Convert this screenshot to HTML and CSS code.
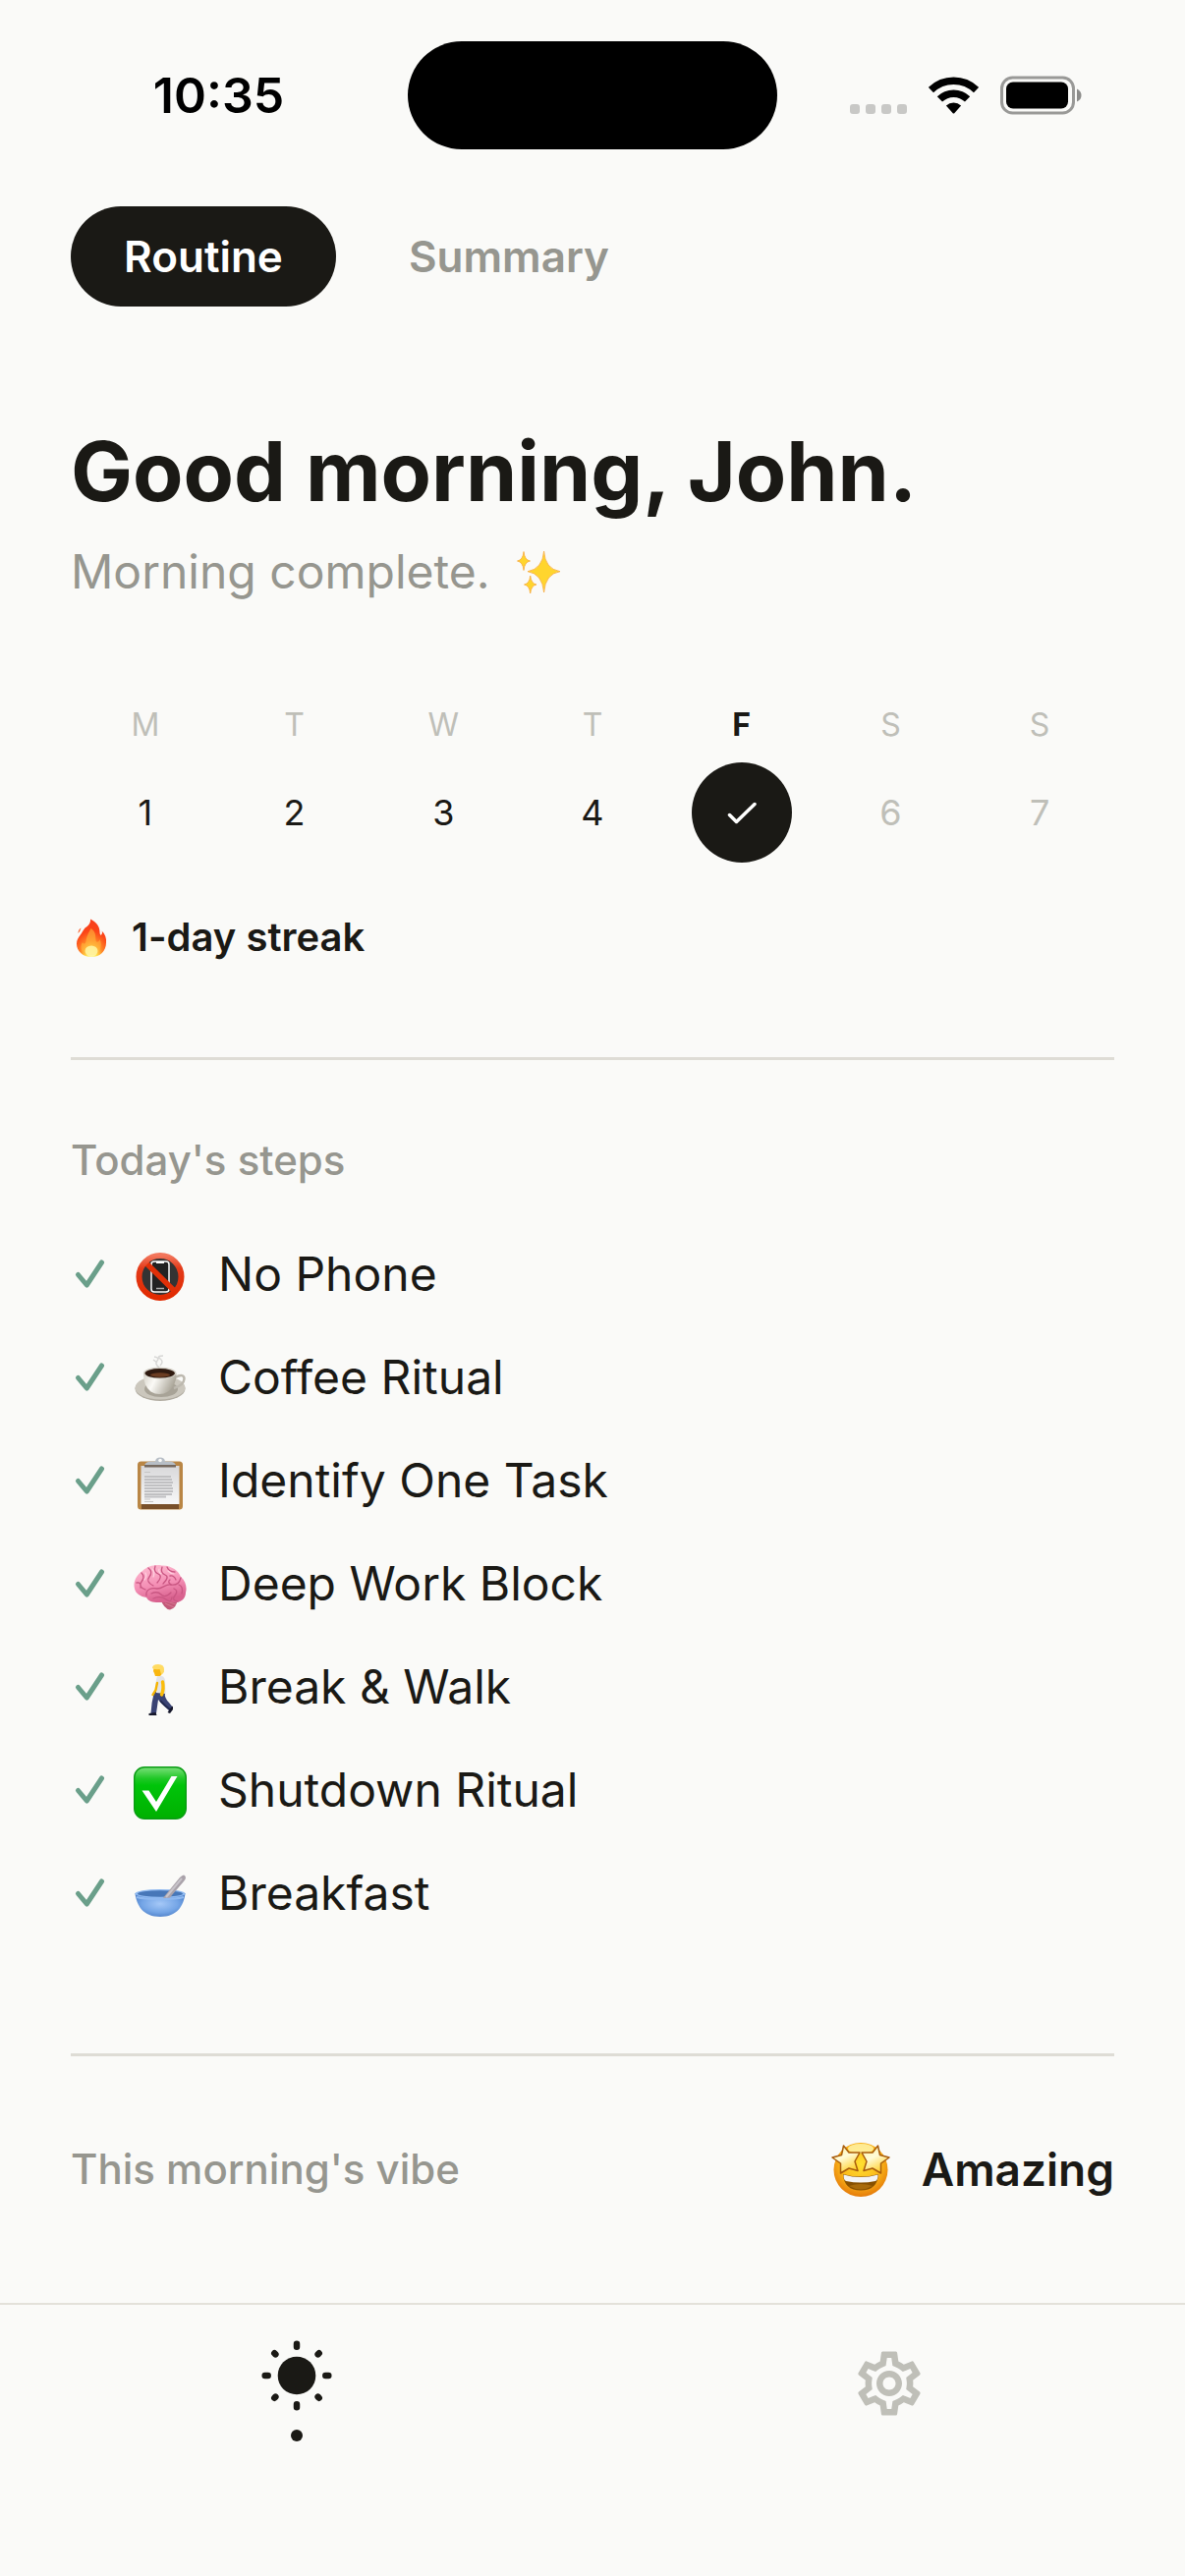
FILE: index.html
```html
<!DOCTYPE html>
<html lang="en">
<head>
  <meta charset="UTF-8" />
  <meta name="viewport" content="width=device-width, initial-scale=1.0" />
  <title>Morning Routine</title>
  <link rel="stylesheet" href="styles.css">
</head>
<body>
  <header class="status-bar">
    <span class="time">10:35</span>
    <span class="island"></span>
    <div class="status-icons">
      <svg class="signal" width="58" height="38" viewBox="0 0 58 38" fill="#c8c8c6">
        <rect x="0" y="28" width="10" height="10" rx="3" />
        <rect x="16" y="28" width="10" height="10" rx="3" />
        <rect x="32" y="28" width="10" height="10" rx="3" />
        <rect x="48" y="28" width="10" height="10" rx="3" />
      </svg>
      <svg class="wifi" width="51" height="38" viewBox="0 0 51 38">
        <g fill="none" stroke="#000" stroke-width="7.5">
          <path d="M2.4 13.6A33.2 33.2 0 0 1 48.6 13.6" />
          <path d="M11.4 22.9A20.2 20.2 0 0 1 39.6 22.9" />
        </g>
        <path d="M17.9 29.6A11 11 0 0 1 33.1 29.6L26.3 37.2Q25.5 38 24.7 37.2Z" />
      </svg>
      <svg class="battery" width="83" height="40" viewBox="0 0 83 40">
        <rect x="1.5" y="2" width="73" height="36" rx="11" fill="none" stroke="#999997" stroke-width="3" />
        <rect x="6" y="6.5" width="63" height="27" rx="7" />
        <path d="M78 13.5Q82.5 15.5 82.5 20T78 26.5Z" fill="#8c8c8a" />
      </svg>
    </div>
  </header>

  <main>
    <div class="tabs">
      <button class="tab active" type="button">Routine</button>
      <button class="tab" type="button">Summary</button>
    </div>

    <h1>Good morning, John.</h1>
    <p class="subtitle">
      Morning complete.
      <svg width="48" height="48" viewBox="0 0 48 48" fill="#ffd52e" stroke="#f7a93c" stroke-width="0.8" stroke-linejoin="round">
        <path d="M28.6 3Q29.6 21 45 23.7Q30 26 28.6 45Q27 26 12 23.7Q27.2 21 28.6 3Z" />
        <path d="M8 3.5Q8.8 12 14.5 13Q8.8 14 8 22.5Q7.2 14 1.5 13Q7.2 12 8 3.5Z" />
        <path d="M14.7 28Q15.5 36 21 37Q15.5 38 14.7 46Q13.9 38 8.5 37Q13.9 36 14.7 28Z" />
      </svg>
    </p>

    <ol class="week">
      <li class="past"><span class="day">M</span><span class="date">1</span></li>
      <li class="past"><span class="day">T</span><span class="date">2</span></li>
      <li class="past"><span class="day">W</span><span class="date">3</span></li>
      <li class="past"><span class="day">T</span><span class="date">4</span></li>
      <li class="today">
        <span class="day">F</span>
        <span class="date">
          <svg width="36" height="36" viewBox="0 0 36 36" fill="none" stroke="#fff" stroke-width="3.5" stroke-linecap="round" stroke-linejoin="round"><path d="M5.5 20.5L12.5 27.5L31 9.5" /></svg>
        </span>
      </li>
      <li><span class="day">S</span><span class="date">6</span></li>
      <li><span class="day">S</span><span class="date">7</span></li>
    </ol>

    <div class="streak">
      <svg width="42" height="48" viewBox="0 0 42 48">
        <defs>
          <radialGradient id="fire" cx="50%" cy="95%" r="85%">
            <stop offset="0" stop-color="#fffbb0" />
            <stop offset="0.2" stop-color="#ffe24a" />
            <stop offset="0.45" stop-color="#ff8426" />
            <stop offset="0.75" stop-color="#fb4518" />
            <stop offset="1" stop-color="#f8401c" />
          </radialGradient>
        </defs>
        <path d="M20 5.5C26 8.5 29.5 13 29.5 18.5C29.5 21.5 30.5 22.5 31.5 21C32.3 19.8 32 18.5 31.5 17.5C35 20.5 36.5 25 36 29.5C36 38 30 44 21 44C12 44 6 38 6 30.5C6 27 7.5 24.5 9.5 22C11 20 12 17.5 14.5 14.5C17.5 12.5 20.5 10 20 5.5Z" fill="url(#fire)" />
        <path d="M7.5 20Q7.5 16 10.5 14.5Q9.5 18 7.5 20Z" fill="#fb5a24" />
        <path d="M20.5 15C26 18 25 23.5 25.5 27C26 30 29 29 29.5 26C33 33 29 42.5 21 42.5C12 42.5 8 35 12 29C13 31.5 15 31 15.5 28C16.2 23.5 17.5 20.5 20.5 15Z" fill="#ffb73d" opacity="0.6" />
        <ellipse cx="21" cy="38" rx="6.5" ry="5.5" fill="#fff7a6" opacity="0.85" />
      </svg>
      <span>1-day streak</span>
    </div>

    <hr>

    <h2>Today's steps</h2>
    <ul class="steps">
      <li>
        <svg class="check" viewBox="0 0 42 42"><path d="M7.5 21.5L16.3 32L31.5 9" /></svg>
        <svg class="emoji" viewBox="0 -6 54 60">
          <defs>
            <linearGradient id="ban" x1="0" y1="0" x2="0" y2="1">
              <stop offset="0" stop-color="#f2765c" />
              <stop offset="0.3" stop-color="#e33b1a" />
              <stop offset="1" stop-color="#e12a00" />
            </linearGradient>
          </defs>
          <circle cx="27" cy="26.5" r="21" fill="#333" />
          <rect x="18" y="11" width="18" height="31" rx="3" fill="#222" stroke="#fff" stroke-width="1.5" />
          <path d="M23 12H31" stroke="#fff" stroke-width="2" />
          <path d="M23 38.5H31" stroke="#aaa" stroke-width="1.5" />
          <path d="M11.5 11.5L42 41.5" stroke="#e03008" stroke-width="5.5" />
          <circle cx="27" cy="26.5" r="21.5" fill="none" stroke="url(#ban)" stroke-width="6" />
        </svg>
        <span>No Phone</span>
      </li>
      <li>
        <svg class="check" viewBox="0 0 42 42"><path d="M7.5 21.5L16.3 32L31.5 9" /></svg>
        <svg class="emoji" viewBox="0 -6 54 60">
          <defs>
            <linearGradient id="cup" x1="0" y1="0" x2="1" y2="0.3">
              <stop offset="0" stop-color="#d6d2c8" />
              <stop offset="0.4" stop-color="#fbfaf6" />
              <stop offset="1" stop-color="#aaa598" />
            </linearGradient>
          </defs>
          <ellipse cx="27" cy="35.5" rx="25.5" ry="12.5" fill="#b0aba0" />
          <ellipse cx="27" cy="34.5" rx="25.5" ry="12" fill="#cbc7bd" />
          <ellipse cx="28" cy="36" rx="17" ry="8" fill="#a8a397" />
          <path d="M42 24Q51.5 19.5 51.5 25.5Q51 32 41 35" fill="none" stroke="#bdb9af" stroke-width="2.5" />
          <path d="M10 20Q10 33 17.5 38.5Q26 43.5 35 38.5Q43.5 33 43.5 20Z" fill="url(#cup)" />
          <ellipse cx="26.7" cy="19.5" rx="16.7" ry="6" fill="#d5d1c8" />
          <ellipse cx="26.7" cy="19.8" rx="15.2" ry="4.8" fill="#2f1a10" />
          <ellipse cx="27" cy="21.5" rx="10" ry="2.2" fill="#6b3d22" />
          <path d="M26 14Q21 10 24 7T21 3M27 12Q31 8 27 5T30 2M20 6L24 9" fill="none" stroke="#999" stroke-width="1.5" opacity="0.35" />
        </svg>
        <span>Coffee Ritual</span>
      </li>
      <li>
        <svg class="check" viewBox="0 0 42 42"><path d="M7.5 21.5L16.3 32L31.5 9" /></svg>
        <svg class="emoji" viewBox="0 -6 54 60">
          <defs>
            <linearGradient id="paper" x1="0" y1="0" x2="0" y2="1">
              <stop offset="0" stop-color="#d8d8da" />
              <stop offset="1" stop-color="#f8f8f8" />
            </linearGradient>
          </defs>
          <rect x="4" y="4.5" width="46" height="49" rx="3.5" fill="#b98645" />
          <rect x="8" y="47" width="38" height="6" fill="#79502a" />
          <rect x="7.5" y="9" width="39" height="39" fill="url(#paper)" />
          <path d="M11 15.5H17M11 43H17M11 45.5H20" stroke="#c4c4c4" stroke-width="1" />
          <path d="M11 20H38M11 23H39M11 26H40M11 29H39M11 32H40M11 35H40M11 38H39M11 40.5H33" stroke="#c0c0c2" stroke-width="1.8" />
          <path d="M11 8.5Q12 5 17 4.5H22Q22.5 0.5 27 0.5T32 4.5H37Q42 5 43 8.5Z" fill="#b7bec6" />
          <circle cx="27" cy="3.5" r="1.8" fill="#fafaf8" />
          <rect x="11" y="8" width="32" height="2.5" fill="#75695f" />
        </svg>
        <span>Identify One Task</span>
      </li>
      <li>
        <svg class="check" viewBox="0 0 42 42"><path d="M7.5 21.5L16.3 32L31.5 9" /></svg>
        <svg class="emoji" viewBox="0 -6 54 60">
          <defs>
            <linearGradient id="brain" x1="0" y1="0" x2="0.3" y2="1">
              <stop offset="0" stop-color="#ffc0d4" />
              <stop offset="0.6" stop-color="#f48fb5" />
              <stop offset="1" stop-color="#d9628f" />
            </linearGradient>
          </defs>
          <path d="M27 39Q31 50 37 50.5Q44 49 45 38Z" fill="#c25878" />
          <path d="M30 41L43 45M32 44L41 48" stroke="#d4748f" stroke-width="1.2" />
          <path d="M1 29C-1 22 3 15 9 11C14 6 22 4 29 5.5C38 5 46 11 48 17C53 21 54.5 28 53 33C53 39 48 43.5 42 43C36 41.5 32 43.5 25 43C19 43 15 42 13 38C7 37 2 34 1 29Z" fill="url(#brain)" />
          <g fill="none" stroke="#c95682" stroke-width="1.3" stroke-linecap="round">
            <path d="M13 36C12 29 19 28 24 29C30 29 32 24 38 25C44 26 47 22 48 18" />
            <path d="M8 13Q12 17 8 22T12 30M3 23Q8 22 7 28M15 8Q20 12 16 17T20 26M22 6Q20 12 25 14T24 23M29 7Q27 13 32 15T30 24" />
            <path d="M34 7Q36 12 42 12M37 16Q41 15 43 20M37 20Q34 22 38 25M46 25Q51 27 49 34M41 29Q46 31 42 36T45 42M18 34Q24 31 28 35T38 33M20 39Q28 36 33 40T39 38" />
          </g>
          <g fill="none" stroke="#ffdce7" stroke-width="1.2" stroke-linecap="round" opacity="0.8">
            <path d="M12 13Q14 17 11 20M19 9Q22 13 20 17M26 9Q25 12 28 14M35 11Q38 14 41 14" />
          </g>
        </svg>
        <span>Deep Work Block</span>
      </li>
      <li>
        <svg class="check" viewBox="0 0 42 42"><path d="M7.5 21.5L16.3 32L31.5 9" /></svg>
        <svg class="emoji" viewBox="0 -6 54 60">
          <path d="M24.5 28L32 30Q31 35 36 40L40 45L37 49L28.5 41L25 37L23 51H17.5Q18 40 21 29Z" fill="#3a4374" />
          <path d="M27 38L32 43L37 47" fill="none" stroke="#232a50" stroke-width="2" />
          <path d="M15.5 51L22.5 50L23.5 53H15.5ZM34.5 50L38 45L40 43.5L40 47L37 51Z" fill="#15172a" />
          <path d="M24 13Q31 11.5 32 17L32.5 31L23 30Q21.5 20 24 13Z" fill="#e2e3e8" />
          <path d="M24 20L22.5 27L19.5 32" fill="none" stroke="#f5b400" stroke-width="2.4" stroke-linecap="round" />
          <path d="M29.5 19Q31 26 28.5 32" fill="none" stroke="#fbbd0b" stroke-width="3.4" stroke-linecap="round" />
          <path d="M20.5 5L30 4L30.5 9L27 13H22L21 10L20 8Z" fill="#f9b60e" />
          <path d="M19 5Q19 1 25 1Q31.5 1 31 7Q30.5 11 28 11L26.5 6Q22 7 19 5Z" fill="#ffdb63" />
        </svg>
        <span>Break &amp; Walk</span>
      </li>
      <li>
        <svg class="check" viewBox="0 0 42 42"><path d="M7.5 21.5L16.3 32L31.5 9" /></svg>
        <svg class="emoji" viewBox="0 -6 54 60">
          <defs>
            <linearGradient id="box" x1="0" y1="0" x2="0" y2="1">
              <stop offset="0" stop-color="#7be07b" />
              <stop offset="0.22" stop-color="#1fc726" />
              <stop offset="0.35" stop-color="#00c40a" />
              <stop offset="1" stop-color="#00b000" />
            </linearGradient>
          </defs>
          <rect x="0.7" y="0.7" width="52.6" height="52.6" rx="10.5" fill="url(#box)" stroke="#0a9c14" stroke-width="1.4" />
          <path d="M8.5 24.5H15.5L23 36L38.5 10H44.5L23 46Z" fill="#fff" />
        </svg>
        <span>Shutdown Ritual</span>
      </li>
      <li>
        <svg class="check" viewBox="0 0 42 42"><path d="M7.5 21.5L16.3 32L31.5 9" /></svg>
        <svg class="emoji" viewBox="0 -6 54 60">
          <defs>
            <radialGradient id="bowl" cx="50%" cy="45%" r="60%">
              <stop offset="0" stop-color="#a5c8f7" />
              <stop offset="0.6" stop-color="#74a5e6" />
              <stop offset="1" stop-color="#4b7dc6" />
            </radialGradient>
          </defs>
          <path d="M1.5 24C3 37 10 48 27 48S51 37 52.5 24Z" fill="url(#bowl)" />
          <ellipse cx="27" cy="24.5" rx="25.5" ry="4.5" fill="#8fb9f0" />
          <ellipse cx="27" cy="24.5" rx="23" ry="3.3" fill="#4777b8" />
          <path d="M29 30L47 8Q52 3 53 8Q53 10 51 12L39 26L36 30Z" fill="#a9a2aa" />
          <path d="M33 28L49 9" stroke="#c8c4ca" stroke-width="2" />
          <path d="M3 28Q10 30 27 30T51 28" fill="none" stroke="#8fb9f0" stroke-width="2" />
        </svg>
        <span>Breakfast</span>
      </li>
    </ul>

    <hr>

    <div class="vibe">
      <span class="vibe-label">This morning's vibe</span>
      <span class="vibe-value">
        <svg width="60" height="60" viewBox="0 0 60 60">
          <defs>
            <radialGradient id="face" cx="50%" cy="40%" r="60%">
              <stop offset="0" stop-color="#ffe030" />
              <stop offset="0.6" stop-color="#fbb91a" />
              <stop offset="1" stop-color="#e57b0a" />
            </radialGradient>
            <linearGradient id="star" x1="0" y1="0" x2="0.5" y2="1">
              <stop offset="0" stop-color="#fff3a0" />
              <stop offset="0.5" stop-color="#fffbd8" />
              <stop offset="1" stop-color="#ffd335" />
            </linearGradient>
          </defs>
          <circle cx="30" cy="30.5" r="27.5" fill="url(#face)" />
          <ellipse cx="30" cy="9" rx="13" ry="5" fill="#fff6b0" opacity="0.8" />
          <path d="M12 35Q30 40 48 35Q47 51.5 30 51.5T12 35Z" fill="#875000" />
          <path d="M12.5 35.5Q30 40.5 47.5 35.5Q47.5 41 45 42Q30 45 15 42Q12.5 41 12.5 35.5Z" fill="#f4f4f4" />
          <path d="M18 47Q30 43 42 47Q30 54 18 47Z" fill="#a86a0a" />
          <g fill="url(#star)" stroke="#a85c0c" stroke-width="1.5" stroke-linejoin="round">
            <path d="M12.5 6L18 13L29 13L24 22L27 31.5L18 29L9.5 34L9.5 24L1 18L10.5 15.5Z" />
            <path d="M47.5 6L42 13L31 13L36 22L33 31.5L42 29L50.5 34L50.5 24L59 18L49.5 15.5Z" />
          </g>
        </svg>
        <strong>Amazing</strong>
      </span>
    </div>
  </main>

  <nav class="tab-bar">
    <a href="#routine" class="active" aria-label="Routine">
      <svg width="78" height="78" viewBox="-39 -39 78 78" stroke="#1a1915" stroke-width="6.5" stroke-linecap="round">
        <circle r="19.3" fill="#1a1915" stroke="none" />
        <path d="M0-29.3V-32.3M0 29.3V32.3M-29.3 0H-32.3M29.3 0H32.3M21.6-21.6L22.7-22.7M21.6 21.6L22.7 22.7M-21.6-21.6L-22.7-22.7M-21.6 21.6L-22.7 22.7" />
      </svg>
      <span class="dot"></span>
    </a>
    <a href="#settings" aria-label="Settings">
      <svg width="78" height="78" viewBox="0 0 24 24" fill="#bfbfb8">
        <path d="M19.43 12.98c.04-.32.07-.64.07-.98 0-.34-.03-.66-.07-.98l2.11-1.65c.19-.15.24-.42.12-.64l-2-3.46c-.09-.16-.26-.25-.44-.25-.06 0-.12.01-.17.03l-2.49 1c-.52-.4-1.08-.73-1.69-.98l-.38-2.65C14.46 2.18 14.25 2 14 2h-4c-.25 0-.46.18-.49.42l-.38 2.65c-.61.25-1.17.59-1.69.98l-2.49-1c-.06-.02-.12-.03-.18-.03-.17 0-.34.09-.43.25l-2 3.46c-.13.22-.07.49.12.64l2.11 1.65c-.04.32-.07.65-.07.98 0 .33.03.66.07.98l-2.11 1.65c-.19.15-.24.42-.12.64l2 3.46c.09.16.26.25.44.25.06 0 .12-.01.17-.03l2.49-1c.52.4 1.08.73 1.69.98l.38 2.65c.03.24.24.42.49.42h4c.25 0 .46-.18.49-.42l.38-2.65c.61-.25 1.17-.59 1.69-.98l2.49 1c.06.02.12.03.18.03.17 0 .34-.09.43-.25l2-3.46c.12-.22.07-.49-.12-.64l-2.11-1.65zm-1.98-1.71c.04.31.05.52.05.73 0 .21-.02.43-.05.73l-.14 1.13.89.7 1.08.84-.7 1.21-1.27-.51-1.04-.42-.9.68c-.43.32-.84.56-1.25.73l-1.06.43-.16 1.13-.2 1.35h-1.4l-.19-1.35-.16-1.13-1.06-.43c-.43-.18-.83-.41-1.23-.71l-.91-.7-1.06.43-1.27.51-.7-1.21 1.08-.84.89-.7-.14-1.13c-.03-.31-.05-.54-.05-.74s.02-.43.05-.73l.14-1.13-.89-.7-1.08-.84.7-1.21 1.27.51 1.04.42.9-.68c.43-.32.84-.56 1.25-.73l1.06-.43.16-1.13.2-1.35h1.39l.19 1.35.16 1.13 1.06.43c.43.18.83.41 1.23.71l.91.7 1.06-.43 1.27-.51.7 1.21-1.07.85-.89.7.14 1.13zM12 8c-2.21 0-4 1.79-4 4s1.79 4 4 4 4-1.79 4-4-1.79-4-4-4zm0 6c-1.1 0-2-.9-2-2s.9-2 2-2 2 .9 2 2-.9 2-2 2z" />
      </svg>
    </a>
  </nav>
</body>
</html>
```

FILE: styles.css
```css
* {
  margin: 0;
  padding: 0;
  box-sizing: border-box;
}

body {
  min-height: 100vh;
  display: flex;
  flex-direction: column;
  background-color: #fafaf8;
  color: #1a1915;
  font-family: Inter, "Liberation Sans", sans-serif;
  font-optical-sizing: none;
}

svg {
  display: block;
  flex-shrink: 0;
}

.status-bar {
  display: grid;
  grid-template-columns: 1fr 376px 1fr;
  align-items: center;
  padding: 42px 0;
  color: #000;
}

.time {
  padding-left: 30px;
  text-align: center;
  font-size: 50px;
  font-weight: 600;
}

.island {
  height: 110px;
  border-radius: 55px;
  background-color: #000;
}

.status-icons {
  display: flex;
  align-items: center;
  justify-content: center;
  gap: 22px;
  padding-right: 32px;
}

main {
  padding: 16px 72px 0;
}

.tabs {
  display: flex;
  gap: 20px;
}

.tab {
  height: 102px;
  padding: 0 54px;
  border: none;
  border-radius: 51px;
  background: none;
  color: #96968f;
  font: inherit;
  font-size: 44px;
  font-weight: 600;
  cursor: pointer;
}

.tab.active {
  background-color: #1a1915;
  color: #fff;
}

h1 {
  margin-top: 120px;
  font-size: 84px;
  line-height: 96px;
  font-weight: 700;
}

.subtitle {
  display: flex;
  align-items: center;
  gap: 26px;
  margin-top: 24px;
  font-size: 48px;
  line-height: 60px;
  color: #96968f;
}

.week {
  display: grid;
  grid-template-columns: repeat(7, 1fr);
  margin-top: 108px;
  list-style: none;
  color: #bfbfb8;
}

.week li {
  display: flex;
  flex-direction: column;
  align-items: center;
  gap: 20px;
}

.day {
  font-size: 32px;
  line-height: 36px;
}

.date {
  display: flex;
  align-items: center;
  justify-content: center;
  width: 102px;
  height: 102px;
  border-radius: 50%;
  font-size: 36px;
}

.past .date {
  color: #1a1915;
}

.today .day {
  color: #1a1915;
  font-weight: 700;
}

.today .date {
  background-color: #1a1915;
}

.streak {
  display: flex;
  align-items: center;
  gap: 20px;
  margin-top: 52px;
  font-size: 40px;
  line-height: 48px;
  font-weight: 600;
}

hr {
  height: 3px;
  margin-top: 98px;
  border: none;
  background-color: #dedcd5;
}

h2 {
  margin-top: 78px;
  color: #96968f;
  font-size: 42px;
  line-height: 48px;
  font-weight: 500;
}

.steps {
  margin-top: 39px;
  list-style: none;
}

.steps li {
  display: flex;
  align-items: center;
  height: 105px;
  font-size: 48px;
}

.steps + hr {
  margin-top: 111px;
}

.check {
  width: 42px;
  height: 42px;
  margin-right: 22px;
  fill: none;
  stroke: #6a9f8a;
  stroke-width: 5;
  stroke-linecap: round;
  stroke-linejoin: round;
}

.emoji {
  width: 54px;
  height: 60px;
  margin-right: 32px;
}

.vibe {
  display: flex;
  align-items: center;
  justify-content: space-between;
  margin-top: 85px;
  line-height: 60px;
}

.vibe-label {
  color: #96968f;
  font-size: 42px;
  font-weight: 500;
}

.vibe-value {
  display: flex;
  align-items: center;
  gap: 32px;
  font-size: 46px;
}

.vibe-value strong {
  font-weight: 600;
}

.tab-bar {
  display: flex;
  flex-grow: 1;
  margin-top: 106px;
  border-top: 2px solid #e3e1da;
}

.tab-bar a {
  flex: 1;
  display: flex;
  flex-direction: column;
  align-items: center;
  padding-top: 41px;
}

.tab-bar a.active {
  gap: 16px;
  padding-top: 33px;
}

.dot {
  width: 12px;
  height: 12px;
  border-radius: 50%;
  background-color: #1a1915;
}
```
